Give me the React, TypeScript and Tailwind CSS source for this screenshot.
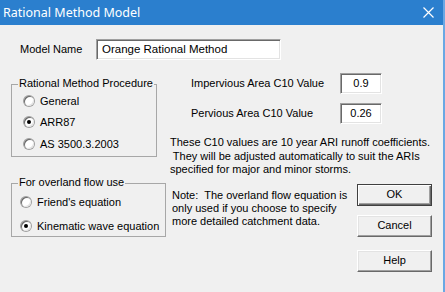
import React from "react";

const sunken =
  "bg-white border border-t-[#a0a0a0] border-l-[#a0a0a0] border-r-white border-b-white shadow-[inset_1px_1px_0_#696969,inset_-1px_-1px_0_#e3e3e3]";

function Radio({ checked, label }: { checked?: boolean; label: string }) {
  return (
    <div className="flex items-center h-[14px]">
      <div className="w-[12px] h-[12px] rounded-full bg-[#a0a0a0] p-[1px] shrink-0">
        <div className="w-full h-full rounded-full bg-white shadow-[inset_1px_1px_0_#696969,inset_-1px_-1px_0_#e3e3e3] flex items-center justify-center">
          {checked && <div className="w-[4px] h-[4px] rounded-full bg-black" />}
        </div>
      </div>
      <span className="ml-[5px] whitespace-nowrap">{label}</span>
    </div>
  );
}

function Btn({ label, def }: { label: string; def?: boolean }) {
  return (
    <div
      className={
        "w-[75px] h-[22px] flex items-center justify-center bg-[#f0f0f0] border " +
        (def
          ? "border-[#404040] shadow-[inset_1px_1px_0_#fff,inset_-1px_-1px_0_#696969,inset_-2px_-2px_0_#a0a0a0]"
          : "border-t-white border-l-white border-r-[#696969] border-b-[#696969] shadow-[inset_-1px_-1px_0_#a0a0a0,inset_1px_1px_0_#e3e3e3]")
      }
    >
      {label}
    </div>
  );
}

export default function App() {
  return (
    <div
      className="w-[445px] h-[292px] bg-[#f0f0f0] flex flex-col text-[11px] text-black leading-[13px] border-r-2 border-[#6aa8e4] overflow-hidden"
      style={{ fontFamily: '"Liberation Sans", Arial, sans-serif' }}
    >
      <div className="h-[25px] bg-[#2b7fce] flex items-center justify-between pl-[3px] pr-[9px] text-white text-[13px] shrink-0">
        <span style={{ fontFamily: '"Noto Sans", "Liberation Sans", sans-serif' }} className="text-[12.5px] leading-[16px]">
          Rational Method Model
        </span>
        <svg width="11" height="11" viewBox="0 0 11 11">
          <path d="M0.5 0.5 L10.5 10.5 M10.5 0.5 L0.5 10.5" stroke="white" strokeWidth="1.2" />
        </svg>
      </div>

      <div className="flex items-center mt-[14px] pl-[20px]">
        <span className="w-[76px]">Model Name</span>
        <div className={"w-[185px] h-[21px] flex items-center pl-[5px] text-[11.5px] " + sunken}>Orange Rational Method</div>
      </div>

      <div className="flex">
        <div className="pl-[11px] w-[170px] flex flex-col">
          <div className="relative mt-[24px] w-[146px] h-[73px] border border-[#a7a7a7] pl-[11px] pt-[9px]">
            <span className="absolute left-[6px] top-[-8px] bg-[#f0f0f0] px-[1px] whitespace-nowrap">Rational Method Procedure</span>
            <Radio label="General" />
            <div className="mt-[7px]">
              <Radio checked label="ARR87" />
            </div>
            <div className="mt-[8px]">
              <Radio label="AS 3500.3.2003" />
            </div>
          </div>
          <div className="relative mt-[26px] w-[155px] h-[54px] border border-[#a7a7a7] pl-[8px] pt-[11px]">
            <span className="absolute left-[6px] top-[-8px] bg-[#f0f0f0] px-[1px] whitespace-nowrap">For overland flow use</span>
            <Radio label="Friend's equation" />
            <div className="mt-[10px]">
              <Radio checked label="Kinematic wave equation" />
            </div>
          </div>
        </div>

        <div className="flex flex-col">
          <div className="flex items-center mt-[13px] pl-[21px]">
            <span className="w-[149px]">Impervious Area C10 Value</span>
            <div className={"w-[42px] h-[21px] flex items-center justify-center " + sunken}>0.9</div>
          </div>
          <div className="flex items-center mt-[9px] pl-[21px]">
            <span className="w-[149px]">Pervious Area C10 Value</span>
            <div className={"w-[42px] h-[21px] flex items-center justify-center " + sunken}>0.26</div>
          </div>
          <p className="mt-[12px] leading-[13.5px] whitespace-pre">
            {"These C10 values are 10 year ARI runoff coefficients.\n They will be adjusted automatically to suit the ARIs\nspecified for major and minor storms."}
          </p>
          <div className="flex mt-[7px]">
            <p className="ml-[2px] w-[185px] pt-[5px] whitespace-pre">
              {"Note:  The overland flow equation is\nonly used if you choose to specify\nmore detailed catchment data."}
            </p>
            <div className="flex flex-col">
              <Btn def label="OK" />
              <div className="mt-[9px]">
                <Btn label="Cancel" />
              </div>
              <div className="mt-[13px]">
                <Btn label="Help" />
              </div>
            </div>
          </div>
        </div>
      </div>
    </div>
  );
}
